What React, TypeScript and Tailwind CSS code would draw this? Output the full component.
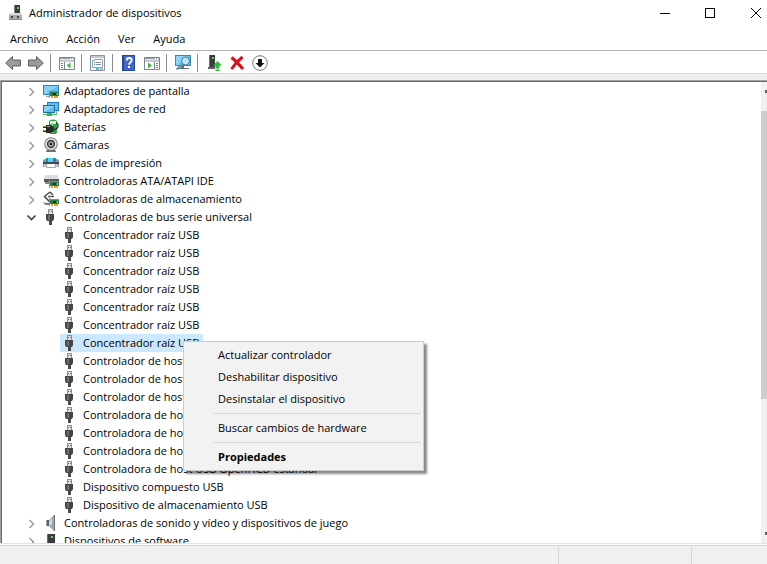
import { clsx } from 'clsx';
import type { ReactNode } from 'react';

type IconName =
  | 'display'
  | 'network'
  | 'battery'
  | 'camera'
  | 'printer'
  | 'ide'
  | 'storage'
  | 'usb'
  | 'sound'
  | 'software';

type TNode = {
  label: string;
  icon: IconName;
  open?: boolean;
  children?: { label: string; selected?: boolean }[];
};

const nodes: TNode[] = [
  { label: 'Adaptadores de pantalla', icon: 'display' },
  { label: 'Adaptadores de red', icon: 'network' },
  { label: 'Baterías', icon: 'battery' },
  { label: 'Cámaras', icon: 'camera' },
  { label: 'Colas de impresión', icon: 'printer' },
  { label: 'Controladoras ATA/ATAPI IDE', icon: 'ide' },
  { label: 'Controladoras de almacenamiento', icon: 'storage' },
  {
    label: 'Controladoras de bus serie universal',
    icon: 'usb',
    open: true,
    children: [
      { label: 'Concentrador raíz USB' },
      { label: 'Concentrador raíz USB' },
      { label: 'Concentrador raíz USB' },
      { label: 'Concentrador raíz USB' },
      { label: 'Concentrador raíz USB' },
      { label: 'Concentrador raíz USB' },
      { label: 'Concentrador raíz USB', selected: true },
      { label: 'Controlador de host' },
      { label: 'Controlador de host' },
      { label: 'Controlador de host' },
      { label: 'Controladora de host' },
      { label: 'Controladora de host' },
      { label: 'Controladora de host' },
      { label: 'Controladora de host USB OpenHCD estándar' },
      { label: 'Dispositivo compuesto USB' },
      { label: 'Dispositivo de almacenamiento USB' },
    ],
  },
  {
    label: 'Controladoras de sonido y vídeo y dispositivos de juego',
    icon: 'sound',
  },
  { label: 'Dispositivos de software', icon: 'software' },
];

function Svg({ children }: { children: ReactNode }) {
  return (
    <svg viewBox="0 0 16 16" className="w-4 h-4 shrink-0" aria-hidden="true">
      {children}
    </svg>
  );
}

// small green expansion card, shared by several device classes
function Card({ x, y }: { x: number; y: number }) {
  return (
    <g transform={`translate(${x} ${y})`}>
      <path d="M0 0h1v8H0z" fill="#8d9296" />
      <path d="M1 1h9v5H1z" fill="#2c7a48" />
      <path d="M1 1h9v1H1z" fill="#5aa673" />
      <path d="M4 3h3v2H4z" fill="#0f3d22" />
      <path d="M8 3h1v2H8z" fill="#9fd3a8" />
      <path d="M2 6h2v2H2zM5 6h4v2H5z" fill="#e0a730" />
    </g>
  );
}

const deviceIcons: Record<IconName, ReactNode> = {
  display: (
    <Svg>
      <path d="M0 2h16v10H0z" fill="#2f84bb" />
      <path d="M1 3h14v8H1z" fill="#5fbdf2" />
      <path d="M1 3h14L3 11H1z" fill="#86d0f8" />
      <path d="M3 13h3v1H3z" fill="#9aa0a4" />
      <Card x={6} y={7} />
    </Svg>
  ),
  network: (
    <Svg>
      <path d="M4 1h12v9H4z" fill="#2678b0" />
      <path d="M5 2h10v7H5z" fill="#5fbdf2" />
      <path d="M0 4h12v8H0z" fill="#1f6ea6" />
      <path d="M1 5h10v6H1z" fill="#5fbdf2" />
      <path d="M1 5h10l-9 6H1z" fill="#8bd1f9" />
      <path d="M0 13h14v1H0z" fill="#43c463" />
      <path d="M4 12h5v3H4z" fill="#2fb552" />
      <path d="M13 10h1v3h-1z" fill="#8fa3ad" />
    </Svg>
  ),
  battery: (
    <Svg>
      <path d="M8 0h4v2H8z" fill="#c9cfcb" />
      <rect x="6" y="1" width="8" height="14" rx="2" fill="#2f9e44" />
      <path d="M7 2h6v3H7z" fill="#e7efe8" />
      <path d="M8 4h2v10H8z" fill="#8fe08e" />
      <path d="M0 7.500h4M0 11.500h4" stroke="#a98f3c" strokeWidth="1" />
      <path d="M0 8.500h4M0 12.500h4" stroke="#2f2f2f" strokeWidth="1" />
      <path d="M3 6h3q5 0 5 4t-5 4H3z" fill="#2a2a2a" />
      <path d="M10 10.500q5 0 5-3.500t-2-2.500" stroke="#2a2a2a" strokeWidth="1.300" fill="none" />
      <path d="M4 7.500h3" stroke="#9a9a9a" />
    </Svg>
  ),
  camera: (
    <Svg>
      <path d="M3 15q0-3 5-3t5 3z" fill="#6c6e70" />
      <circle cx="8" cy="7" r="6.800" fill="#7c7f82" />
      <circle cx="8" cy="7" r="5.700" fill="#ededee" />
      <circle cx="8" cy="7" r="4.200" fill="#3c3f42" />
      <circle cx="8" cy="7" r="2.600" fill="#aab0b6" />
      <circle cx="8" cy="7" r="1.300" fill="#1f2225" />
    </Svg>
  ),
  printer: (
    <Svg>
      <path d="M3 3h10v5H3z" fill="#2289cf" />
      <path d="M5 3h5v4H5z" fill="#53d6ee" />
      <path d="M0 6q0-2 3-2v3h10V4q3 0 3 2v6h-3V9H3v3H0z" fill="#8e9295" />
      <path d="M0 7h16v2H0z" fill="#474b4e" />
      <path d="M1 9h2v3H1zM13 9h2v3h-2z" fill="#c5c8ca" />
      <path d="M3 9h10v4H3z" fill="#fff" />
      <path d="M3.500 9v3.500h9V9" stroke="#a4a8ab" fill="none" />
    </Svg>
  ),
  ide: (
    <Svg>
      <path d="M3 2h11l2 4v3H1V6z" fill="#b8bcbf" />
      <path d="M3 2h11l2 4H1z" fill="#dcdee0" />
      <path d="M1 6h15v3H1z" fill="#55595c" />
      <path d="M2 9h4v2H2z" fill="#85898c" />
      <Card x={6} y={7} />
    </Svg>
  ),
  storage: (
    <Svg>
      <path d="M7 1 1.500 5.500 6 10l2-2M7 1l3 3" stroke="#4f5356" strokeWidth="1.600" fill="none" />
      <path d="M5 5.500h6" stroke="#4f5356" strokeWidth="1.400" />
      <path d="M0 11h7v3H2z" fill="#777c80" />
      <path d="M1 11h5v1H1z" fill="#dfe1e2" />
      <Card x={6} y={7} />
    </Svg>
  ),
  usb: (
    <Svg>
      <path d="M5 0h5v5H5z" fill="#8f8f8f" />
      <path d="M6 1h3v4H6z" fill="#e4e4e4" />
      <path d="M6 2h1v1H6zM8 2h1v1H8z" fill="#707070" />
      <path d="M3 5h8v5l-1 2H4l-1-2z" fill="#454545" />
      <path d="M5 6h2v5H5z" fill="#6e6e6e" />
      <path d="M6 12h3v4H6z" fill="#4a4a4a" />
    </Svg>
  ),
  sound: (
    <Svg>
      <path d="M3 5h3v6H3z" fill="#59616a" />
      <path d="M3 5h1v6H3z" fill="#9aa2aa" />
      <path d="M6 5 11 0v16l-5-5z" fill="#9da7b1" />
      <path d="M6 6.500 9 3v7L6 10z" fill="#d3dae0" />
      <path d="M11 0h1v16h-1z" fill="#6a737c" />
    </Svg>
  ),
  software: (
    <Svg>
      <path d="M4 1h8v15H4z" fill="#3a3c3e" />
      <path d="M4 1h1v15H4z" fill="#6b6e70" />
      <path d="M8 3h2v2H8z" fill="#4be04b" />
    </Svg>
  ),
};

function Arrow({ flip }: { flip?: boolean }) {
  return (
    <Svg>
      <path
        transform={flip ? 'translate(16 0) scale(-1 1)' : undefined}
        d="M.7 8 7.500 1.500V5h8v6h-8v3.500z"
        fill="#9b9b9b"
        stroke="#5f5f5f"
      />
    </Svg>
  );
}

// console window with a side pane, on the left or on the right
function Pane({ right }: { right?: boolean }) {
  return (
    <Svg>
      <path d="M.5 2.500h15v12H.5z" fill="#fff" stroke="#7d858d" />
      <path d="M1 3h14v1H1z" fill="#9ba3ab" />
      <path d="M11 3h1v1h-1zM13 3h1v1h-1z" fill="#fff" />
      <path d="M1 4.500h14" stroke="#dde1e5" />
      <path d="M1 6h14" stroke="#8f979e" />
      {right ? (
        <>
          <path d="M10.500 7v7" stroke="#7d858d" />
          <path d="M12 8.500h2M12 10.500h2M12 12.500h2" stroke="#3f86c8" />
          <path d="M4 7.500 8 10.500l-4 3z" fill="#3fb54a" />
        </>
      ) : (
        <>
          <path d="M5.500 7v7" stroke="#7d858d" />
          <path d="M2 8.500h2M2 10.500h2M2 12.500h2" stroke="#3f86c8" />
          <path d="M11.500 7.500v6l-4-3z" fill="#3fb54a" />
        </>
      )}
    </Svg>
  );
}

type TTool = { name: string; icon: ReactNode };

const tools: (TTool | null)[] = [
  { name: 'Atrás', icon: <Arrow /> },
  { name: 'Adelante', icon: <Arrow flip /> },
  null,
  { name: 'Mostrar u ocultar árbol de consola', icon: <Pane /> },
  null,
  {
    name: 'Propiedades',
    icon: (
      <Svg>
        <path d="M.5.500h14v15H.500z" fill="#f4f5f6" stroke="#8d9399" />
        <path d="M1 1h13v2H1z" fill="#c3c8cc" />
        <path d="M2.500 5.500h2v-1h8v8h-10z" fill="#fff" stroke="#9aa1a8" />
        <path d="M4 7.500h1M4 9.500h1" stroke="#2fa8dd" />
        <path d="M6 7.500h5M6 9.500h5" stroke="#858c93" />
        <path d="M6 13h3v2H6z" fill="#3cc3ea" />
        <path d="M10 13h3v2h-3z" fill="#b5babf" />
      </Svg>
    ),
  },
  null,
  {
    name: 'Ayuda',
    icon: (
      <Svg>
        <path d="M1 0h13v16H1z" fill="#24489f" />
        <path d="M3 1h10v14H3z" fill="#4468c8" />
        <path
          d="M5.700 5.500q0-2.500 2.500-2.500t2.500 2.200q0 1.300-1.300 2.200T8.100 9.800"
          stroke="#fff"
          strokeWidth="1.800"
          fill="none"
        />
        <path d="M7 11h2v2H7z" fill="#fff" />
      </Svg>
    ),
  },
  { name: 'Mostrar u ocultar panel de acciones', icon: <Pane right /> },
  null,
  {
    name: 'Buscar cambios de hardware',
    icon: (
      <Svg>
        <path d="M0 0h16v11H0z" fill="#3787bb" />
        <path d="M1 1h14v9H1z" fill="#69c4f6" />
        <path d="M1 1h9L3 10H1z" fill="#8dd6fb" />
        <path d="M6 11h3v2H6zM2 13h12v1H2z" fill="#64727c" />
        <path d="M8 9 1.500 14.500" stroke="#5c8fae" strokeWidth="1.800" />
        <circle cx="10.500" cy="6" r="4" fill="#b6e4fb" stroke="#55758a" />
      </Svg>
    ),
  },
  null,
  {
    name: 'Actualizar controlador',
    icon: (
      <Svg>
        <path d="M3 0h6v13H3z" fill="#3a3c3e" />
        <path d="M3 0h1v13H3z" fill="#747779" />
        <path d="M6 2h2v2H6z" fill="#4be04b" />
        <path d="M2 12h7v2H2z" fill="#606365" />
        <path d="m11.500 6 4.500 4.500h-2.500V13h-4v-2.500H7z" fill="#2eb83a" />
        <path d="M9.500 13.500h4v1h-4zM9.500 15h4v1h-4z" fill="#2eb83a" />
      </Svg>
    ),
  },
  {
    name: 'Desinstalar el dispositivo',
    icon: (
      <Svg>
        <path d="M2.500 2.500Q7 6 14 14M13.500 2Q7 7 2.500 14" stroke="#df0b17" strokeWidth="3" fill="none" />
      </Svg>
    ),
  },
  {
    name: 'Deshabilitar dispositivo',
    icon: (
      <Svg>
        <circle cx="8" cy="8" r="7.300" fill="#fff" stroke="#777" />
        <path d="M6 4h4v4h2.500L8 12.500 3.500 8H6z" fill="#111" />
      </Svg>
    ),
  },
];

function TitleBar() {
  return (
    <header className="flex h-[26px] shrink-0 items-center">
      <div className="flex flex-1 items-center gap-1 pl-2">
        <svg viewBox="0 0 17 17" className="w-[17px] h-[17px]" aria-hidden="true">
          <path d="M6 0h6v9H6z" fill="#3d4042" />
          <path d="M6 0h1v9H6z" fill="#77797b" />
          <path d="M9 2h2v2H9z" fill="#49d34c" />
          <path d="M1 9h13v6H1z" fill="#a9adb0" />
          <path d="M1 8h13v2H1z" fill="#dadcde" />
          <path d="M3 11h2v2H3zM9 11h2v2H9z" fill="#3d4042" />
          <path d="M1 14h13v1H1z" fill="#85898c" />
        </svg>
        <h1>Administrador de dispositivos</h1>
      </div>
      <button aria-label="Minimizar" className="flex h-full w-[46px] items-center justify-center">
        <span className="h-px w-2.5 bg-black" />
      </button>
      <button aria-label="Maximizar" className="flex h-full w-11 items-center justify-center">
        <span className="h-2.5 w-2.5 border border-black" />
      </button>
      <button aria-label="Cerrar" className="flex h-full w-[35px] items-center pl-[19px]">
        <svg viewBox="0 0 10 10" className="w-2.5 h-2.5" aria-hidden="true">
          <path d="m0 0 10 10M10 0 0 10" stroke="#000" />
        </svg>
      </button>
    </header>
  );
}

function Chevron({ open }: { open?: boolean }) {
  return (
    <svg viewBox="0 0 12 12" className="w-3 h-3" aria-hidden="true" fill="none">
      {open ? (
        <path d="m1.500 4.500 4 4 4-4" stroke="#404040" strokeWidth="1.600" />
      ) : (
        <path d="m3.500 3 4 4-4 4" stroke="#a0a0a0" strokeWidth="1.600" />
      )}
    </svg>
  );
}

function TreeItem({ node }: { node: TNode }) {
  return (
    <li role="treeitem" aria-expanded={!!node.open}>
      <div className="flex h-[18px] items-center gap-[5px] pl-6">
        <button aria-label={node.open ? 'Contraer' : 'Expandir'}>
          <Chevron open={node.open} />
        </button>
        {deviceIcons[node.icon]}
        <span>{node.label}</span>
      </div>
      {node.open && (
        <ul role="group" className="flex flex-col items-start pl-[58px]">
          {node.children?.map((child, i) => (
            <li
              key={i}
              role="treeitem"
              aria-selected={!!child.selected}
              className={clsx(
                'flex h-[18px] items-center gap-[5px] pl-0.5 pr-1',
                child.selected && 'bg-[#cce8ff]'
              )}
            >
              {deviceIcons.usb}
              <span>{child.label}</span>
            </li>
          ))}
        </ul>
      )}
    </li>
  );
}

function MenuItem({ children, bold }: { children: string; bold?: boolean }) {
  return (
    <button
      role="menuitem"
      className={clsx('flex h-[22px] w-full items-center pl-8', bold && 'font-bold')}
    >
      {children}
    </button>
  );
}

function MenuLine() {
  return <div role="separator" className="my-[3px] ml-7 h-px bg-[#d7d7d7]" />;
}

function ContextMenu() {
  return (
    <div
      role="menu"
      className="absolute left-[181px] top-[259px] w-[241px] border border-[#ccc] bg-[#f2f2f2] p-0.5 shadow-[3px_3px_2px_rgba(0,0,0,0.45)]"
    >
      <MenuItem>Actualizar controlador</MenuItem>
      <MenuItem>Deshabilitar dispositivo</MenuItem>
      <MenuItem>Desinstalar el dispositivo</MenuItem>
      <MenuLine />
      <MenuItem>Buscar cambios de hardware</MenuItem>
      <MenuLine />
      <MenuItem bold>Propiedades</MenuItem>
    </div>
  );
}

export default function App() {
  return (
    <div className="flex h-screen flex-col overflow-hidden bg-white font-['Segoe_UI','Open_Sans',sans-serif] text-[11px] leading-[18px] whitespace-nowrap text-black">
      <TitleBar />

      <nav className="flex h-6 shrink-0 items-center gap-0.5 pt-0.5 pl-0.5">
        {['Archivo', 'Acción', 'Ver', 'Ayuda'].map((item) => (
          <button key={item} className="px-2">
            {item}
          </button>
        ))}
      </nav>

      <div
        role="toolbar"
        className="flex h-6 shrink-0 items-center border-y border-t-[#b4b4b4] border-b-[#d9d9d9] pt-0.5 pl-px"
      >
        {tools.map((tool, i) =>
          tool ? (
            <button key={i} aria-label={tool.name} className="flex w-[23px] pl-1">
              {tool.icon}
            </button>
          ) : (
            <span key={i} className="mr-1 ml-[3px] h-[18px] w-px bg-[#8c8c8c]" />
          )
        )}
      </div>

      {/* tree and scroll bar */}
      <div className="flex min-h-0 flex-1 flex-col bg-[#f0f0f0] pt-1.5">
        <main className="flex min-h-0 flex-1 border-t border-l border-[#a0a0a0]">
          <div className="flex min-w-0 flex-1 border-t border-l border-[#696969] bg-white">
            <div className="relative min-w-0 flex-1 overflow-hidden">
              <ul role="tree">
                {nodes.map((node) => (
                  <TreeItem key={node.label} node={node} />
                ))}
              </ul>
              <ContextMenu />
            </div>
            <div className="flex w-1.5 flex-col overflow-hidden bg-[#f0f0f0]">
              <div className="flex h-[29px] justify-end pt-2">
                <span className="h-[3px] w-0.5 bg-[#606060]" />
              </div>
              <div className="grow-2 basis-0 bg-[#cdcdcd]" />
              <div className="flex min-h-0 grow basis-0 items-end justify-end">
                <span className="mb-2 h-[3px] w-0.5 bg-[#606060]" />
              </div>
            </div>
          </div>
        </main>
      </div>

      {/* status bar */}
      <footer className="shrink-0 border-t border-[#e3e3e3] bg-white pt-px">
        <div className="flex h-[19px] border-t border-[#d7d7d7] bg-[#f0f0f0] pt-px">
          <div className="flex-1" />
          <div className="w-[209px] border-l border-[#d7d7d7]">
            <div className="ml-[132px] h-full border-l border-[#d7d7d7]" />
          </div>
        </div>
      </footer>
    </div>
  );
}
